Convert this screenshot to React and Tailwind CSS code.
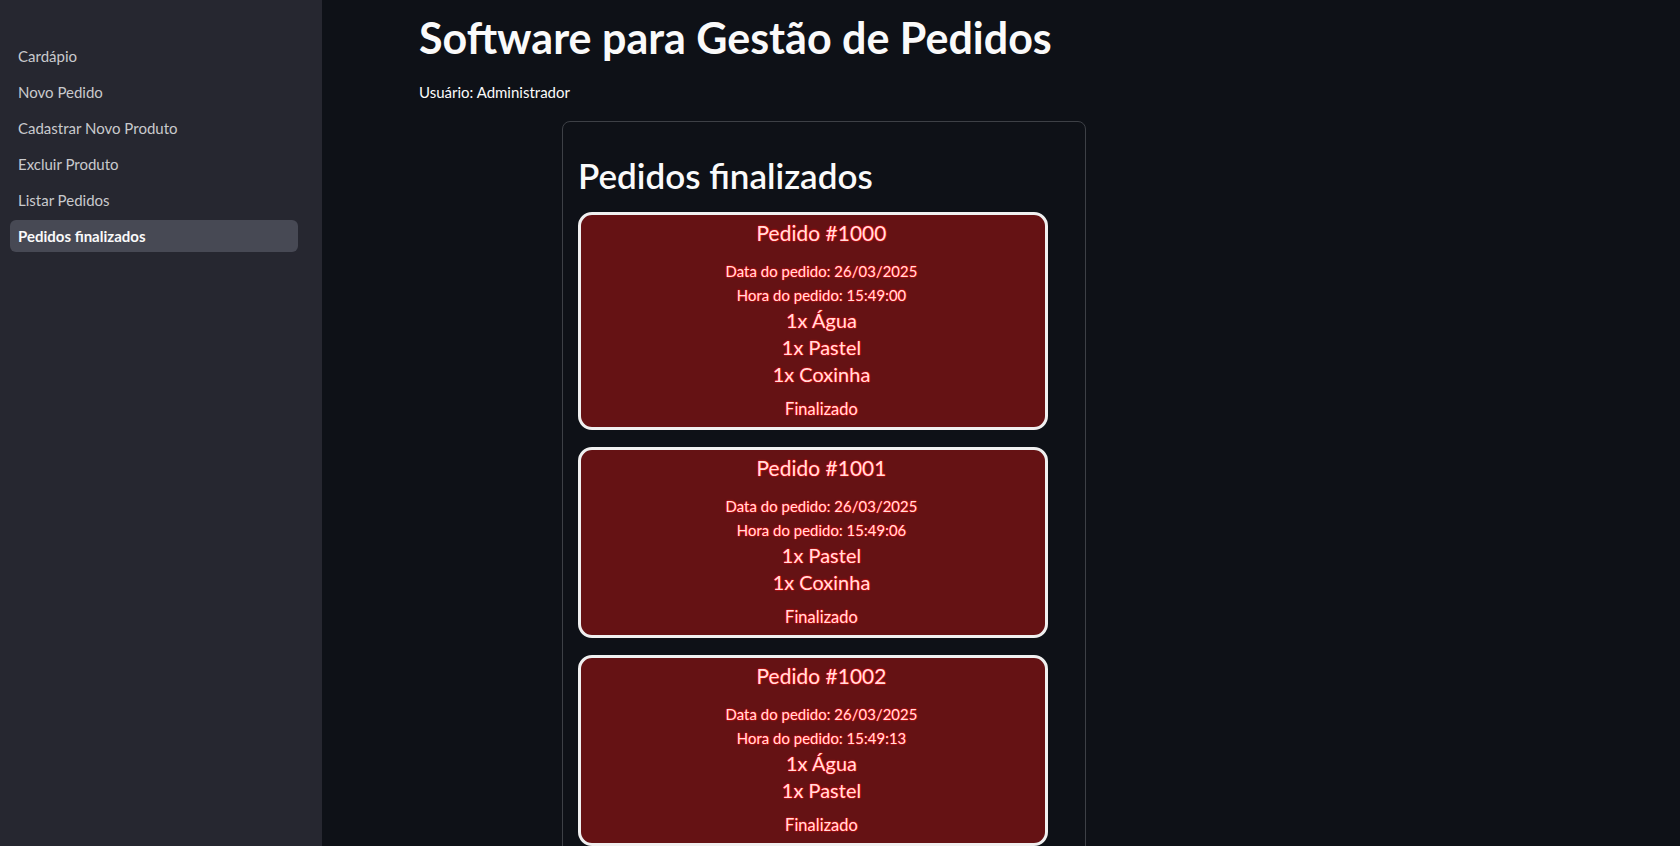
import React from "react";

const menu = [
  "Cardápio",
  "Novo Pedido",
  "Cadastrar Novo Produto",
  "Excluir Produto",
  "Listar Pedidos",
  "Pedidos finalizados",
];

const pedidos = [
  { id: 1000, data: "26/03/2025", hora: "15:49:00", itens: ["1x Água", "1x Pastel", "1x Coxinha"] },
  { id: 1001, data: "26/03/2025", hora: "15:49:06", itens: ["1x Pastel", "1x Coxinha"] },
  { id: 1002, data: "26/03/2025", hora: "15:49:13", itens: ["1x Água", "1x Pastel"] },
];

// texto claro com contorno vermelho
const glow =
  "text-[#ffdede] [text-shadow:0_0_1px_#ff0000,0_0_1px_#ff0000,0_0_2px_#ff2020]";

function PedidoCard({ pedido }) {
  return (
    <div className="w-[470px] shrink-0 rounded-[14px] border-[3px] border-[#f0f0f0] bg-[#651214] pl-[17px] pt-[3px] pb-[6px] text-center">
      <div className={`text-[21px] leading-[29px] ${glow}`}>Pedido #{pedido.id}</div>
      <div className={`mt-[12px] text-[15px] leading-[24px] ${glow}`}>
        Data do pedido: {pedido.data}
      </div>
      <div className={`text-[15px] leading-[24px] ${glow}`}>
        Hora do pedido: {pedido.hora}
      </div>
      {pedido.itens.map((item) => (
        <div key={item} className={`text-[20px] leading-[27px] ${glow}`}>
          {item}
        </div>
      ))}
      <div className={`mt-[9px] text-[16.5px] leading-[24px] ${glow}`}>Finalizado</div>
    </div>
  );
}

export default function App() {
  return (
    <div className="flex h-screen overflow-hidden bg-[#0e1117] font-['Lato','Liberation_Sans',sans-serif]">
      {/* Sidebar */}
      <div className="w-[322px] shrink-0 bg-[#262730] pl-[10px] pr-[24px] pt-[40px]">
        <ul className="flex flex-col gap-[4px]">
          {menu.map((item) => {
            const active = item === "Pedidos finalizados";
            return (
              <li
                key={item}
                className={`flex h-[32px] items-center rounded-[6px] px-[8px] text-[15px] ${
                  active ? "bg-[#474954] font-bold text-[#fafafa]" : "text-[#c9cacd]"
                }`}
              >
                {item}
              </li>
            );
          })}
        </ul>
      </div>

      {/* Main */}
      <div className="flex-1 pl-[97px] pt-[11px]">
        <h1 className="text-[43px] font-bold leading-[53px] text-[#fafafa]">
          Software para Gestão de Pedidos
        </h1>
        <p className="mt-[16px] text-[15px] leading-[24px] text-[#fafafa]">Usuário: Administrador</p>

        <div className="ml-[143px] mt-[17px] w-[524px] rounded-lg border border-[#3d4046] px-[15px] pt-[32px] pb-[16px]">
          <h2 className="text-[35px] font-semibold leading-[43px] text-[#fafafa]">Pedidos finalizados</h2>
          <div className="mt-[15px] flex flex-col gap-[17px]">
            {pedidos.map((p) => (
              <PedidoCard key={p.id} pedido={p} />
            ))}
          </div>
        </div>
      </div>
    </div>
  );
}
